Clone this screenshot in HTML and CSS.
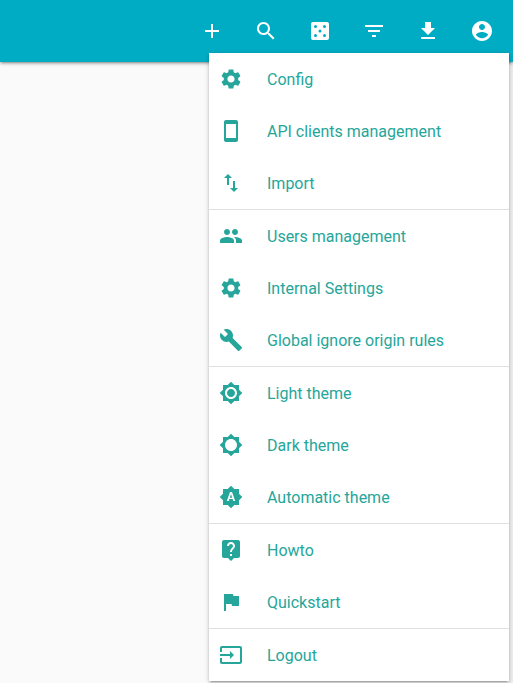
FILE: index.html
```html
<!DOCTYPE html>
<html lang="en">
<head>
<meta charset="utf-8">
<title>Menu</title>
<link rel="stylesheet" href="styles.css">
</head>
<body>
<header class="navbar">
  <nav class="actions">
    <a class="action"><svg class="icon" viewBox="0 0 24 24"><path d="M19 13h-6v6h-2v-6H5v-2h6V5h2v6h6v2z"/></svg></a>
    <a class="action"><svg class="icon" viewBox="0 0 24 24"><path d="M15.5 14h-.79l-.28-.27C15.41 12.59 16 11.11 16 9.5 16 5.91 13.09 3 9.5 3S3 5.91 3 9.5 5.91 16 9.5 16c1.61 0 3.09-.59 4.23-1.57l.27.28v.79l5 4.99L20.49 19l-4.99-5zm-6 0C7.01 14 5 11.99 5 9.5S7.01 5 9.5 5 14 7.01 14 9.5 11.99 14 9.5 14z"/></svg></a>
    <a class="action"><svg class="icon" viewBox="0 0 24 24"><path fill-rule="evenodd" d="M19 3H5c-1.100 0-2 .9-2 2v14c0 1.100.9 2 2 2h14c1.100 0 2-.9 2-2V5c0-1.100-.9-2-2-2zM7.500 18a1.500 1.500 0 1 1 0-3 1.500 1.500 0 0 1 0 3zm0-9a1.500 1.500 0 1 1 0-3 1.500 1.500 0 0 1 0 3zm4.500 4.500a1.500 1.500 0 1 1 0-3 1.500 1.500 0 0 1 0 3zm4.500 4.500a1.500 1.500 0 1 1 0-3 1.500 1.500 0 0 1 0 3zm0-9a1.500 1.500 0 1 1 0-3 1.500 1.500 0 0 1 0 3z"/></svg></a>
    <a class="action"><svg class="icon" viewBox="0 0 24 24"><path d="M10 18h4v-2h-4v2zM3 6v2h18V6H3zm3 7h12v-2H6v2z"/></svg></a>
    <a class="action"><svg class="icon" viewBox="0 0 24 24"><path d="M19 9h-4V3H9v6H5l7 7 7-7zM5 18v2h14v-2H5z"/></svg></a>
    <a class="action"><svg class="icon" viewBox="0 0 24 24"><path d="M12 2C6.480 2 2 6.480 2 12s4.480 10 10 10 10-4.480 10-10S17.520 2 12 2zm0 3c1.660 0 3 1.340 3 3s-1.340 3-3 3-3-1.340-3-3 1.340-3 3-3zm0 14.200c-2.500 0-4.710-1.280-6-3.220.03-1.990 4-3.080 6-3.080 1.990 0 5.970 1.090 6 3.080-1.290 1.940-3.500 3.220-6 3.220z"/></svg></a>
  </nav>
</header>
<main class="page"></main>
<ul class="dropdown">
  <li class="item"><svg class="icon" viewBox="0 0 24 24"><path id="gear" d="M19.140 12.940c.04-.3.060-.61.060-.94 0-.32-.02-.64-.07-.94l2.030-1.580c.18-.14.230-.41.120-.61l-1.920-3.320c-.12-.22-.37-.29-.59-.22l-2.390.960c-.5-.38-1.030-.7-1.620-.94l-.36-2.540c-.04-.24-.24-.41-.48-.41h-3.840c-.24 0-.43.170-.47.410l-.36 2.540c-.59.240-1.130.570-1.620.940l-2.390-.96c-.22-.08-.47 0-.59.220L2.740 8.870c-.12.210-.08.470.120.610l2.030 1.580c-.05.3-.09.630-.09.940s.02.640.070.940l-2.030 1.580c-.18.140-.23.410-.12.610l1.920 3.320c.12.220.37.290.59.220l2.390-.96c.5.380 1.030.7 1.620.940l.36 2.540c.05.240.24.410.48.410h3.840c.24 0 .44-.17.470-.41l.36-2.540c.59-.24 1.130-.56 1.620-.94l2.390.960c.22.080.47 0 .59-.22l1.920-3.320c.12-.22.070-.47-.12-.61l-2.010-1.580zM12 15.600c-1.980 0-3.600-1.620-3.600-3.600s1.620-3.600 3.600-3.600 3.600 1.620 3.600 3.600-1.620 3.600-3.600 3.600z"/></svg><span class="label">Config</span></li>
  <li class="item"><svg class="icon" viewBox="0 0 24 24"><path d="M17 1.010L7 1c-1.100 0-2 .9-2 2v18c0 1.100.9 2 2 2h10c1.100 0 2-.9 2-2V3c0-1.100-.9-1.990-2-1.990zM17 19H7V5h10v14z"/></svg><span class="label">API clients management</span></li>
  <li class="item"><svg class="icon" viewBox="0 0 24 24"><path d="M16 17.010V10h-2v7.010h-3L15 21l4-3.990h-3zM9 3L5 6.990h3V14h2V6.990h3L9 3z"/></svg><span class="label">Import</span></li>
  <li class="divider"></li>
  <li class="item"><svg class="icon" viewBox="0 0 24 24"><path d="M16 11c1.660 0 2.990-1.340 2.990-3S17.660 5 16 5c-1.660 0-3 1.340-3 3s1.340 3 3 3zm-8 0c1.660 0 2.990-1.340 2.990-3S9.660 5 8 5C6.340 5 5 6.340 5 8s1.340 3 3 3zm0 2c-2.330 0-7 1.170-7 3.500V19h14v-2.500c0-2.330-4.670-3.500-7-3.500zm8 0c-.29 0-.62.020-.97.050 1.160.84 1.970 1.970 1.970 3.450V19h6v-2.500c0-2.330-4.670-3.500-7-3.500z"/></svg><span class="label">Users management</span></li>
  <li class="item"><svg class="icon" viewBox="0 0 24 24"><use href="#gear"/></svg><span class="label">Internal Settings</span></li>
  <li class="item"><svg class="icon" viewBox="0 0 24 24"><path d="M22.700 19l-9.100-9.100c.9-2.300.4-5-1.500-6.900-2-2-5-2.400-7.400-1.300L9 6 6 9 1.600 4.700C.4 7.100.9 10.100 2.900 12.100c1.900 1.900 4.600 2.400 6.900 1.500l9.100 9.100c.4.4 1 .4 1.400 0l2.300-2.300c.5-.4.5-1.100.1-1.400z"/></svg><span class="label">Global ignore origin rules</span></li>
  <li class="divider"></li>
  <li class="item"><svg class="icon" viewBox="0 0 24 24"><path d="M20 8.690V4h-4.690L12 .69 8.690 4H4v4.690L.69 12 4 15.310V20h4.690L12 23.310 15.310 20H20v-4.690L23.310 12 20 8.690zM12 18c-3.310 0-6-2.690-6-6s2.690-6 6-6 6 2.690 6 6-2.690 6-6 6zm0-10c-2.210 0-4 1.790-4 4s1.790 4 4 4 4-1.790 4-4-1.790-4-4-4z"/></svg><span class="label">Light theme</span></li>
  <li class="item"><svg class="icon" viewBox="0 0 24 24"><path d="M20 15.310L23.310 12 20 8.690V4h-4.690L12 .69 8.690 4H4v4.690L.69 12 4 15.310V20h4.690L12 23.310 15.310 20H20v-4.690zM12 18c-3.310 0-6-2.690-6-6s2.690-6 6-6 6 2.690 6 6-2.690 6-6 6z"/></svg><span class="label">Dark theme</span></li>
  <li class="item"><svg class="icon" viewBox="0 0 24 24"><path d="M10.850 12.650h2.300L12 9l-1.150 3.650zM20 8.690V4h-4.690L12 .69 8.690 4H4v4.690L.69 12 4 15.310V20h4.690L12 23.310 15.310 20H20v-4.690L23.310 12 20 8.690zM14.300 16l-.7-2h-3.200l-.7 2H7.800L11 7h2l3.200 9h-1.900z"/></svg><span class="label">Automatic theme</span></li>
  <li class="divider"></li>
  <li class="item"><svg class="icon" viewBox="0 0 24 24"><path d="M19 2H5c-1.110 0-2 .9-2 2v14c0 1.100.89 2 2 2h4l3 3 3-3h4c1.100 0 2-.9 2-2V4c0-1.100-.9-2-2-2zm-6 16h-2v-2h2v2zm2.070-7.750l-.9.920C13.450 11.900 13 12.500 13 14h-2v-.5c0-1.100.45-2.100 1.170-2.830l1.240-1.260c.37-.36.59-.86.59-1.410 0-1.100-.9-2-2-2s-2 .9-2 2H8c0-2.210 1.790-4 4-4s4 1.790 4 4c0 .88-.36 1.680-.93 2.250z"/></svg><span class="label">Howto</span></li>
  <li class="item"><svg class="icon" viewBox="0 0 24 24"><path d="M14.400 6L14 4H5v17h2v-7h5.600l.4 2h7V6z"/></svg><span class="label">Quickstart</span></li>
  <li class="divider"></li>
  <li class="item"><svg class="icon" viewBox="0 0 24 24"><path d="M21 3.010H3c-1.100 0-2 .9-2 2V9h2V4.990h18v14.030H3V15H1v4.010c0 1.100.9 1.980 2 1.980h18c1.100 0 2-.88 2-1.980v-14c0-1.110-.9-2-2-2zM11 16l4-4-4-4v3H1v2h10v3z"/></svg><span class="label">Logout</span></li>
</ul>
</body>
</html>
```
FILE: styles.css
```css
* {
  box-sizing: border-box;
}

body {
  display: flex;
  flex-direction: column;
  margin: 0;
  height: 683px;
  overflow: hidden;
  background: #fafafa;
  font-family: Roboto, sans-serif;
}

.navbar {
  position: relative;
  z-index: 1;
  flex: none;
  height: 62px;
  padding-right: 4px;
  background: #00acc4;
  box-shadow: 0 2px 2px 0 rgba(0, 0, 0, .14), 0 3px 1px -2px rgba(0, 0, 0, .12), 0 1px 5px 0 rgba(0, 0, 0, .2);
}

.actions {
  display: flex;
  justify-content: flex-end;
  height: 100%;
  color: #fff;
}

.action {
  display: flex;
  align-items: center;
  padding: 0 15px;
}

.icon {
  flex: none;
  width: 24px;
  height: 24px;
  fill: currentColor;
}

.page {
  flex: 1;
  border-right: 4px solid #eee;
}

.dropdown {
  position: absolute;
  z-index: 2;
  top: 53px;
  right: 4px;
  width: 300px;
  margin: 0;
  padding: 0;
  list-style: none;
  background: #fff;
  color: #26a69a;
  box-shadow: 0 2px 2px 0 rgba(0, 0, 0, .14), 0 3px 1px -2px rgba(0, 0, 0, .12), 0 1px 5px 0 rgba(0, 0, 0, .2);
}

.item {
  display: flex;
  align-items: center;
  gap: 24px;
  height: 52px;
  padding: 0 10px;
  font-size: 16px;
  line-height: 22px;
}

.label {
  padding-top: 2px;
}

.divider {
  height: 1px;
  background: #e0e0e0;
}
```
